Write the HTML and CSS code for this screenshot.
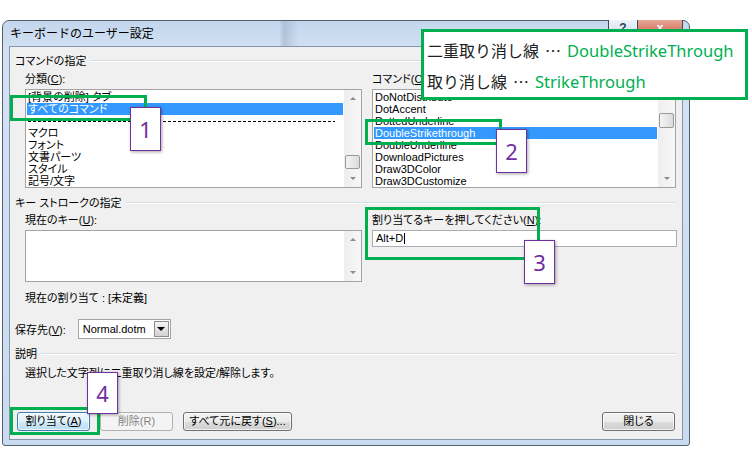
FILE: index.html
```html
<!DOCTYPE html>
<html lang="ja">
<head>
    <meta charset="UTF-8">
    <meta name="viewport" content="width=device-width, initial-scale=1.0">
    <title>キーボードのユーザー設定</title>
    <link rel="stylesheet" href="styles.css">
</head>
<body>
    <div class="window">
        <div class="titlebar">
            <div class="title">キーボードのユーザー設定</div>
            <div class="caption-buttons">
                <div class="cap-btn help">?</div>
                <div class="cap-btn close">x</div>
            </div>
        </div>

        <div class="client">
            <div class="group-label">コマンドの指定</div>
            <div class="columns">
                <div class="column">
                    <div class="label">分類(<u>C</u>):</div>
                    <div class="listbox">
                        <div class="items">
                            <div class="item">[背景の削除] タブ</div>
                            <div class="item selected">すべてのコマンド</div>
                            <div class="item separator"></div>
                            <div class="item">マクロ</div>
                            <div class="item">フォント</div>
                            <div class="item">文書パーツ</div>
                            <div class="item">スタイル</div>
                            <div class="item">記号/文字</div>
                        </div>
                        <div class="scrollbar">
                            <div class="arrow up"></div>
                            <div class="track"><div class="thumb thumb-low"></div></div>
                            <div class="arrow down"></div>
                        </div>
                    </div>
                </div>
                <div class="column">
                    <div class="label">コマンド(<u>O</u>):</div>
                    <div class="listbox">
                        <div class="items">
                            <div class="item">DoNotDistribute</div>
                            <div class="item">DotAccent</div>
                            <div class="item">DottedUnderline</div>
                            <div class="item selected">DoubleStrikethrough</div>
                            <div class="item">DoubleUnderline</div>
                            <div class="item">DownloadPictures</div>
                            <div class="item">Draw3DColor</div>
                            <div class="item">Draw3DCustomize</div>
                        </div>
                        <div class="scrollbar">
                            <div class="arrow up"></div>
                            <div class="track"><div class="thumb thumb-high"></div></div>
                            <div class="arrow down"></div>
                        </div>
                    </div>
                </div>
            </div>

            <div class="group-label gap-section">キー ストロークの指定</div>
            <div class="columns">
                <div class="column">
                    <div class="label tight">現在のキー(<u>U</u>):</div>
                    <div class="listbox keybox">
                        <div class="items"></div>
                        <div class="scrollbar">
                            <div class="arrow up"></div>
                            <div class="track"></div>
                            <div class="arrow down"></div>
                        </div>
                    </div>
                    <div class="label assigned">現在の割り当て : [未定義]</div>
                </div>
                <div class="column">
                    <div class="label tight">割り当てるキーを押してください(<u>N</u>):</div>
                    <div class="keyinput">Alt+D<span class="caret"></span></div>
                </div>
            </div>

            <div class="save-row">
                <span>保存先(<u>V</u>):</span>
                <div class="dropdown">
                    <span class="dropdown-text">Normal.dotm</span>
                    <span class="dropdown-btn"></span>
                </div>
            </div>

            <div class="group-label gap-desc">説明</div>
            <div class="desc">選択した文字列に二重取り消し線を設定/解除します。</div>

            <div class="buttons">
                <div class="btn default">割り当て(<u>A</u>)</div>
                <div class="btn disabled">削除(R)</div>
                <div class="btn wide">すべて元に戻す(<u>S</u>)...</div>
                <div class="btn close-btn">閉じる</div>
            </div>
        </div>
    </div>

    <!-- annotations drawn over the dialog -->
    <div class="mark mark-1"></div>
    <div class="mark mark-2"></div>
    <div class="mark mark-3"></div>
    <div class="mark mark-4"></div>

    <div class="num num-1">1</div>
    <div class="num num-2">2</div>
    <div class="num num-3">3</div>
    <div class="num num-4">4</div>

    <div class="note">
        <div>二重取り消し線<span class="dots">…</span><span class="en">DoubleStrikeThrough</span></div>
        <div>取り消し線<span class="dots">…</span><span class="en">StrikeThrough</span></div>
    </div>
</body>
</html>
```

FILE: styles.css
```css
body {
    margin: 0;
    padding: 20px 0 0 2px;
    box-sizing: border-box;
    width: 752px;
    height: 453px;
    overflow: hidden;
    position: relative;
    background-color: #ffffff;
    color: #000000;
    font-family: "Liberation Sans", "Noto Sans CJK JP", sans-serif;
    font-size: 11px;
    font-feature-settings: "palt";
}
u {
    text-underline-offset: 1px;
}

/* window frame */
.window {
    width: 688px;
    height: 426px;
    box-sizing: border-box;
    border: 1px solid #56606c;
    border-radius: 7px 7px 3px 3px;
    padding: 0 6px 5px;
    background: linear-gradient(to bottom, #c3d6ec, #d3e2f3 30px, #c9dbef);
    display: flex;
    flex-direction: column;
}
.titlebar {
    height: 25px;
    display: flex;
    justify-content: space-between;
    align-items: flex-start;
    background: linear-gradient(to right, transparent 0, transparent 270px, rgba(150, 170, 195, 0.5) 275px, transparent 290px);
}
.title {
    padding: 6px 0 0 1px;
    font-size: 12px;
    line-height: 14px;
    font-feature-settings: normal;
}
.caption-buttons {
    display: flex;
    margin-top: -1px;
}
.cap-btn {
    height: 20px;
    box-sizing: border-box;
    border: 1px solid #3c4a5c;
    border-top: none;
    text-align: center;
    font-size: 12px;
    font-weight: bold;
    line-height: 17px;
}
.help {
    width: 29px;
    border-right: none;
    border-radius: 0 0 0 4px;
    background: linear-gradient(#eef3f9, #cbd9ea);
    color: #30435c;
}
.close {
    width: 46px;
    border-radius: 0 0 4px 0;
    background: linear-gradient(#e9a898, #c7503f);
    color: #ffffff;
}

/* dialog body */
.client {
    flex: 1;
    border: 1px solid #8595ab;
    background-color: #f0f0f0;
    padding: 7px 6px 8px 5px;
    display: flex;
    flex-direction: column;
}
.group-label {
    display: flex;
    align-items: center;
    height: 14px;
    line-height: 14px;
    white-space: nowrap;
}
.group-label::after {
    content: "";
    flex: 1;
    margin-left: 4px;
    border-top: 1px solid #d5dfe5;
    border-bottom: 1px solid #ffffff;
}
.gap-section {
    margin-top: 8px;
}
.gap-desc {
    margin-top: 7px;
}
.columns {
    display: grid;
    grid-template-columns: 337px 304px;
    column-gap: 10px;
    padding-left: 10px;
}
.label {
    margin-top: 4px;
    height: 14px;
    line-height: 14px;
    white-space: nowrap;
}
.label.tight {
    margin-top: 3px;
}
.label.assigned {
    margin-top: 9px;
}

/* list boxes */
.listbox {
    margin-top: 3px;
    height: 99px;
    box-sizing: border-box;
    border: 1px solid #a3a3a3;
    background-color: #ffffff;
    display: flex;
}
.listbox.keybox {
    height: 52px;
}
.items {
    flex: 1;
    padding: 1px 1px 0;
    overflow: hidden;
}
.item {
    height: 12px;
    line-height: 12px;
    padding-left: 1px;
    white-space: nowrap;
    overflow: hidden;
}
.item.selected {
    background-color: #3399ff;
    color: #ffffff;
}
.item.separator {
    display: flex;
    align-items: center;
    padding-right: 8px;
}
.item.separator::before {
    content: "";
    flex: 1;
    height: 1px;
    background: repeating-linear-gradient(to right, #000 0, #000 3px, transparent 3px, transparent 5px);
}
.scrollbar {
    width: 17px;
    display: flex;
    flex-direction: column;
    background: linear-gradient(to right, #eeeeee, #f7f7f7);
}
.arrow {
    height: 17px;
    display: flex;
    align-items: center;
    justify-content: center;
}
.arrow::after {
    content: "";
    border-left: 3px solid transparent;
    border-right: 3px solid transparent;
}
.arrow.up::after {
    border-bottom: 3px solid #8a8a8a;
}
.arrow.down::after {
    border-top: 3px solid #8a8a8a;
}
.track {
    flex: 1;
}
.thumb {
    margin: 0 1px;
    height: 14px;
    box-sizing: border-box;
    border: 1px solid #9a9a9a;
    border-radius: 2px;
    background: linear-gradient(to right, #f4f4f4, #dcdcdc);
}
.thumb-low {
    margin-top: 48px;
}
.thumb-high {
    margin-top: 6px;
    height: 15px;
}

/* key input */
.keyinput {
    margin-top: 3px;
    width: 305px;
    height: 17px;
    box-sizing: border-box;
    border: 1px solid #abadb3;
    background-color: #ffffff;
    padding-left: 3px;
    line-height: 15px;
    display: flex;
    align-items: center;
}
.caret {
    width: 1px;
    height: 11px;
    margin-left: 1px;
    background-color: #000000;
}

/* save location */
.save-row {
    margin-top: 13px;
    height: 22px;
    display: flex;
    align-items: center;
}
.dropdown {
    margin-left: 12px;
    width: 93px;
    height: 20px;
    box-sizing: border-box;
    border: 1px solid #a5a5a5;
    background-color: #ffffff;
    padding: 1px;
    display: flex;
    align-items: center;
}
.dropdown-text {
    flex: 1;
    padding-left: 3px;
}
.dropdown-btn {
    width: 15px;
    height: 16px;
    box-sizing: border-box;
    border: 1px solid #8e8e8e;
    background: linear-gradient(#f4f4f4, #d2d2d2);
    display: flex;
    align-items: center;
    justify-content: center;
}
.dropdown-btn::after {
    content: "";
    border-left: 4px solid transparent;
    border-right: 4px solid transparent;
    border-top: 4px solid #000000;
}
.desc {
    margin-top: 5px;
    padding-left: 10px;
    height: 14px;
    line-height: 14px;
}

/* buttons */
.buttons {
    margin-top: auto;
    display: flex;
    gap: 10px;
    padding: 0 1px 0 2px;
}
.btn {
    width: 73px;
    height: 19px;
    box-sizing: border-box;
    border: 1px solid #707070;
    border-radius: 3px;
    background: linear-gradient(#f2f2f2 0%, #ebebeb 50%, #dddddd 50%, #cfcfcf 100%);
    box-shadow: inset 0 0 0 1px rgba(255, 255, 255, 0.7);
    text-align: center;
    line-height: 17px;
    white-space: nowrap;
}
.btn.default {
    border-color: #3c7fb1;
    background: linear-gradient(#eef7fd 0%, #e0f1fb 50%, #cfe9f8 50%, #bcdff3 100%);
}
.btn.disabled {
    border-color: #adb2b5;
    background: #f4f4f4;
    box-shadow: none;
    color: #838383;
}
.btn.wide {
    width: 109px;
}
.btn.close-btn {
    margin-left: auto;
}

/* annotations */
.mark {
    position: absolute;
    box-sizing: border-box;
    border: 3px solid #00b050;
}
.mark-1 { left: 10px; top: 95px; width: 137px; height: 26px; }
.mark-2 { left: 365px; top: 119px; width: 137px; height: 26px; }
.mark-3 { left: 365px; top: 207px; width: 175px; height: 53px; }
.mark-4 { left: 10px; top: 407px; width: 90px; height: 28px; }

.num {
    position: absolute;
    width: 31px;
    height: 44px;
    box-sizing: border-box;
    border: 1px solid #7030a0;
    background-color: #ffffff;
    box-shadow: 1px 1px 3px rgba(0, 0, 0, 0.35);
    color: #7030a0;
    font-family: "Noto Sans", sans-serif;
    font-size: 22px;
    display: flex;
    align-items: center;
    justify-content: center;
}
.num-1 { left: 130px; top: 107px; }
.num-2 { left: 496px; top: 129px; }
.num-3 { left: 524px; top: 240px; }
.num-4 { left: 87px; top: 372px; height: 42px; }

.note {
    position: absolute;
    left: 421px;
    top: 29px;
    width: 327px;
    height: 71px;
    box-sizing: border-box;
    border: 3px solid #00b050;
    background-color: #ffffff;
    padding: 3px 0 0 3px;
    font-family: "Noto Sans CJK JP", sans-serif;
    font-feature-settings: normal;
    font-size: 16px;
    line-height: 30px;
    color: #222222;
    white-space: nowrap;
}
.note .dots {
    margin: 0 6px 0 6px;
}
.note .en {
    color: #00b050;
    font-family: "Noto Sans", "Noto Sans CJK JP", sans-serif;
    font-size: 16.5px;
}
```
